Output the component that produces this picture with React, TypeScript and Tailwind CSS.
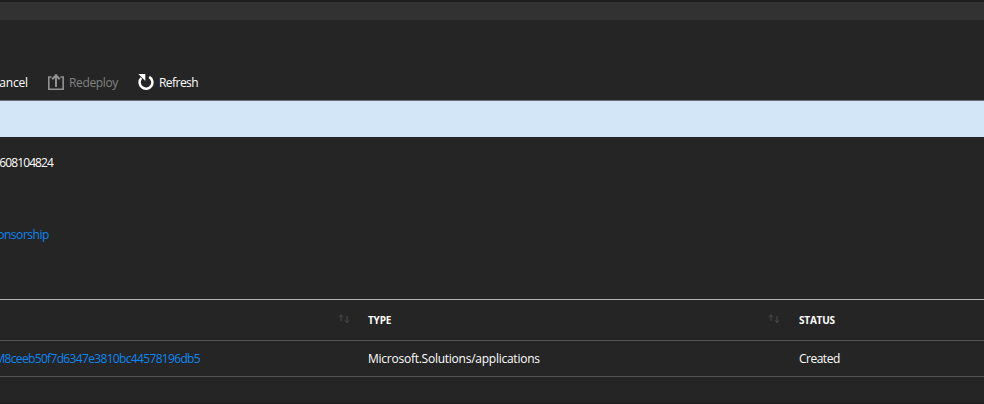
import React from "react";

function RedeployIcon() {
  return (
    <svg width="16" height="16" viewBox="0 0 16 16" fill="none" stroke="#929292">
      <path d="M3.5 3H0.8V15.2H15.2V3H12.5" strokeWidth="1.6" />
      <path d="M8 13V1.5M4.2 5.2L8 1.2L11.8 5.2" strokeWidth="2" />
    </svg>
  );
}

function RefreshIcon() {
  return (
    <svg width="16" height="16" viewBox="0 0 16 16" fill="none">
      <path d="M11.2 2.8A6.4 6.4 0 1 1 3.3 4" stroke="#fff" strokeWidth="2.5" />
      <path d="M0.3 0H7.3V7Z" fill="#fff" />
    </svg>
  );
}

function SortIcon() {
  return (
    <svg width="12" height="10" viewBox="0 0 12 10" fill="none" stroke="#4c4c4c" strokeWidth="1" className="-mt-[2px]">
      <path d="M3 7V1M0.7 3L3 0.8L5.3 3" />
      <path d="M9 2V8.5M6.7 6.3L9 8.5L11.3 6.3" />
    </svg>
  );
}

export default function App() {
  return (
    <div className="flex h-[404px] w-[984px] flex-col overflow-hidden whitespace-nowrap bg-[#252525] font-['Open_Sans','Noto_Sans',sans-serif] text-[12px] leading-4 text-white">
      <div className="h-[2px] shrink-0 bg-[#1d1d1d]" />
      <div className="h-[18px] shrink-0 bg-[#323232]" />
      <div className="flex h-[80px] shrink-0 items-start pt-[54px]">
        <div className="mt-[1px] flex w-[28px] justify-end tracking-[-0.15px]">ancel</div>
        <div className="ml-[20px] flex w-[70px] text-[#828282]">
          <RedeployIcon />
          <span className="ml-[5px] mt-[1px] tracking-[-0.35px]">Redeploy</span>
        </div>
        <div className="ml-[20px] flex">
          <RefreshIcon />
          <span className="ml-[5px] mt-[1px] tracking-[-0.55px]">Refresh</span>
        </div>
      </div>
      <div className="h-[37px] shrink-0 border-t border-[#6c7074] bg-[#d2e6f7]" />
      <div className="flex h-[162px] shrink-0 flex-col pt-[18px]">
        <div className="flex w-[53px] justify-end tracking-[-0.9px]">608104824</div>
        <div className="mt-[56px] flex w-[49px] justify-end tracking-[-0.45px] text-[#0d85f2]">onsorship</div>
      </div>
      <div className="flex h-[42px] shrink-0 items-center border-y border-t-[#b4b4b4] border-b-[#525252] text-[10px] font-bold">
        <div className="flex w-[368px] justify-end pr-[18px]"><SortIcon /></div>
        <div className="flex w-[431px] items-center justify-between pr-[19px]">
          <span className="tracking-[-0.2px]">TYPE</span>
          <SortIcon />
        </div>
        <span className="tracking-[-0.2px]">STATUS</span>
      </div>
      <div className="flex h-[36px] shrink-0 items-center border-b border-[#525252]">
        <div className="w-[368px]">
          <div className="flex w-[200px] justify-end tracking-[-0.66px] text-[#0d85f2]">M8ceeb50f7d6347e3810bc44578196db5</div>
        </div>
        <div className="w-[431px] tracking-[-0.25px]">Microsoft.Solutions/applications</div>
        <div className="tracking-[-0.5px]">Created</div>
      </div>
      <div className="mt-auto h-px bg-[#1d1d1d]" />
    </div>
  );
}
